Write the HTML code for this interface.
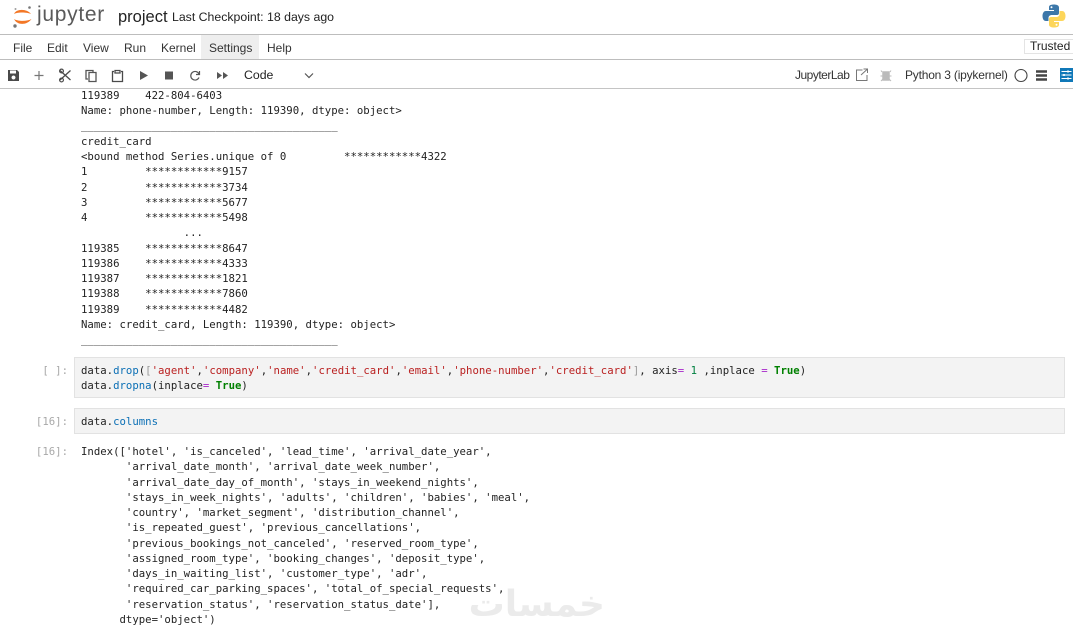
<!DOCTYPE html>
<html><head><meta charset="utf-8"><style>
html,body{margin:0;padding:0;background:#fff}
#p{position:relative;width:1073px;height:634px;overflow:hidden;font-family:"Liberation Sans",sans-serif;color:#222}
.a{position:absolute;white-space:nowrap}
pre{position:absolute;margin:0;left:81px;font:10.66px/15.27px "DejaVu Sans Mono",monospace;color:#222}
.m{font-size:12px;top:41px;line-height:14px;color:#333}
.b{position:absolute;left:74px;width:989px;background:#f3f3f3;border:1px solid #e2e2e2}
.pr{position:absolute;font:10.66px/15px "DejaVu Sans Mono",monospace;color:#a8a8a8;right:1005px}
.s{color:#ba2121}.o{color:#a626c9}.k{color:#008000;font-weight:bold}.n{color:#0b6fb5}.d{color:#008040}.g{color:#999}
.u{position:relative;top:-1px}
</style></head><body><div id="p">
<svg class="a" style="left:11px;top:3px" width="24" height="26" viewBox="0 0 24 26">
<path d="M3 11C5 5.500 16 5.500 20 11C16 9 6 9 3 11Z" fill="#f37726"/><path d="M3 16C6 22.500 16 22.500 20.500 16C16 18.500 7 18.500 3 16Z" fill="#f37726"/>
<circle cx="18.500" cy="4.500" r="1.300" fill="#767677"/><circle cx="4" cy="23" r="1.700" fill="#767677"/><circle cx="4.500" cy="6" r="1" fill="#9e9e9e"/></svg>
<div class="a" style="left:37px;top:2px;font-size:21px;line-height:26px;color:#5a5a5a;letter-spacing:.7px">jupyter</div>
<div class="a" style="left:118px;top:8px;font-size:16.500px;line-height:19px;color:#222">project</div>
<div class="a" style="left:172px;top:9px;font-size:12.300px;line-height:16px;color:#222">Last Checkpoint: 18 days ago</div>
<svg class="a" style="left:1042px;top:4px" width="24" height="24" viewBox="0 0 24 24">
<path d="M11.800 0.500C7 .5 7 2.500 7 3.500V6H12V7H4C1.500 7 .5 9.500 .5 12S1.500 17 4 17H6.500V14C6.500 12 8 11 10 11H15C16.500 11 17 10 17 9V3.500C17 1.500 15 .5 11.800 .5Z" fill="#3c77a9"/>
<path d="M12.200 23.500C17 23.500 17 21.500 17 20.500V18H12V17H20C22.500 17 23.500 14.500 23.500 12S22.500 7 20 7H17.500V10C17.500 12 16 13 14 13H9C7.500 13 7 14 7 15V20.500C7 22.500 9 23.500 12.200 23.500Z" fill="#fdd65a"/>
<circle cx="9.500" cy="3.300" r="1" fill="#fff"/><circle cx="14.500" cy="20.700" r="1" fill="#fff"/></svg>

<div class="a" style="left:0;top:34px;width:1073px;height:1px;background:#bdbdbd"></div>
<div class="a" style="left:201px;top:35px;width:58px;height:24px;background:#eee"></div>
<div class="a m" style="left:13px">File</div><div class="a m" style="left:47px">Edit</div><div class="a m" style="left:83px">View</div><div class="a m" style="left:124px">Run</div><div class="a m" style="left:161px">Kernel</div><div class="a m" style="left:209px">Settings</div><div class="a m" style="left:267px">Help</div>
<div class="a" style="left:1024px;top:39px;width:49px;height:15px;box-sizing:border-box;border:1px solid #e4e4e4;border-right:0;font-size:12px;line-height:13px;padding-left:5px;color:#222">Trusted</div>
<div class="a" style="left:0;top:59px;width:1073px;height:1px;background:#bdbdbd"></div>

<svg class="a" style="left:0;top:60px" width="320" height="30" viewBox="0 0 320 30" fill="none">
<path d="M8 10H17L19 12V21H8Z M10 10.500V13.500H16V10.500Z M13.500 15.500A2 2 0 1 0 13.501 15.500Z" fill="#4a4a4a" fill-rule="evenodd"/>
<path d="M39 11V20M34.500 15.500H43.500" stroke="#777" stroke-width="1.200"/>
<path d="M60 10.500L70.500 20M70.500 10.500L60 20" stroke="#4a4a4a" stroke-width="1.300"/><circle cx="61.500" cy="20" r="1.900" stroke="#4a4a4a" stroke-width="1.200"/><circle cx="61.500" cy="11" r="1.900" stroke="#4a4a4a" stroke-width="1.200"/>
<path d="M88 19H86V10.500H93V12M89 12.500H96V21.500H89Z" stroke="#555" stroke-width="1.300"/>
<path d="M114 11.500H112.500V21.500H122.500V11.500H121M115 10.500H120V13H115Z" stroke="#4a4a4a" stroke-width="1.300"/>
<path d="M140 11L148 15.500L140 20Z" fill="#555"/>
<rect x="165" y="11.500" width="8" height="8" fill="#555"/>
<path d="M199 14A4.300 4.300 0 1 0 199 17.500M199.500 11V14.500H196" stroke="#555" stroke-width="1.200"/>
<path d="M217 12L222 15.500L217 19ZM223 12L228 15.500L223 19Z" fill="#555"/>
<path d="M305 13.500L309 17.500L313 13.500" stroke="#555" stroke-width="1.200"/></svg>
<div class="a" style="left:244px;top:68px;font-size:12.300px;line-height:15px;color:#222">Code</div>

<div class="a" style="left:795px;top:68px;font-size:12px;line-height:15px;color:#333;letter-spacing:-.5px">JupyterLab</div>
<svg class="a" style="left:855px;top:60px" width="195" height="30" viewBox="0 0 195 30" fill="none">
<path d="M7.500 10H1.500V20.500H12V15M6 15L12 9.500M8.500 9H12.500V13" stroke="#777" stroke-width="1"/>
<path d="M28 12H34V20H28Z" fill="#bbb" stroke="#bbb" stroke-width="1.500"/><path d="M27 12L26 10.500M35 12L36 10.500M28 16H25.500M34 16H36.500M28 19L26 21M34 19L36 21" stroke="#bbb"/>
<circle cx="166" cy="15.500" r="6" stroke="#444" stroke-width="1.100"/>
<path d="M181 11.500H192M181 15.500H192M181 19.500H192" stroke="#444" stroke-width="2.400"/></svg>
<div class="a" style="left:905px;top:68px;font-size:12px;line-height:15px;color:#333;letter-spacing:-.2px">Python 3 (ipykernel)</div>
<svg class="a" style="left:1060px;top:68px" width="13" height="14" viewBox="0 0 13 14"><rect width="13" height="14" fill="#1078b8"/><path d="M1.500 3.500H11.500M1.500 7H11.500M1.500 10.500H11.500" stroke="#fff"/><path d="M8 2.500V4.500M4 6V8M8 9.500V11.500" stroke="#fff" stroke-width="1.600"/></svg>
<div class="a" style="left:0;top:88px;width:1073px;height:1px;background:#c4c4c4"></div>

<pre style="top:88px">119389    422-804-6403
Name: phone-number, Length: 119390, dtype: object&gt;
<span class="u">________________________________________</span>
credit_card
&lt;bound method Series.unique of 0         ************4322
1         ************9157
2         ************3734
3         ************5677
4         ************5498
                ...
119385    ************8647
119386    ************4333
119387    ************1821
119388    ************7860
119389    ************4482
Name: credit_card, Length: 119390, dtype: object&gt;
________________________________________</pre>

<div class="pr" style="top:363px">[ ]:</div>
<div class="b" style="top:357px;height:39px"></div>
<pre style="top:363px">data.<span class="n">drop</span>(<span class="g">[</span><span class="s">'agent'</span>,<span class="s">'company'</span>,<span class="s">'name'</span>,<span class="s">'credit_card'</span>,<span class="s">'email'</span>,<span class="s">'phone-number'</span>,<span class="s">'credit_card'</span><span class="g">]</span>, axis<span class="o">=</span> <span class="d">1</span> ,inplace <span class="o">=</span> <span class="k">True</span>)
data.<span class="n">dropna</span>(inplace<span class="o">=</span> <span class="k">True</span>)</pre>
<div class="pr" style="top:414px">[16]:</div>
<div class="b" style="top:408px;height:24px"></div>
<pre style="top:414px">data.<span class="n">columns</span></pre>
<div class="pr" style="top:444px">[16]:</div>
<pre style="top:444px">Index(['hotel', 'is_canceled', 'lead_time', 'arrival_date_year',
       'arrival_date_month', 'arrival_date_week_number',
       'arrival_date_day_of_month', 'stays_in_weekend_nights',
       'stays_in_week_nights', 'adults', 'children', 'babies', 'meal',
       'country', 'market_segment', 'distribution_channel',
       'is_repeated_guest', 'previous_cancellations',
       'previous_bookings_not_canceled', 'reserved_room_type',
       'assigned_room_type', 'booking_changes', 'deposit_type',
       'days_in_waiting_list', 'customer_type', 'adr',
       'required_car_parking_spaces', 'total_of_special_requests',
       'reservation_status', 'reservation_status_date'],
      dtype='object')</pre>
<div class="a" style="left:473px;top:580px;width:132px;text-align:center;font:bold 36px/50px 'DejaVu Sans',sans-serif;color:#ebebeb" dir="rtl">خمسات</div>
</div></body></html>
